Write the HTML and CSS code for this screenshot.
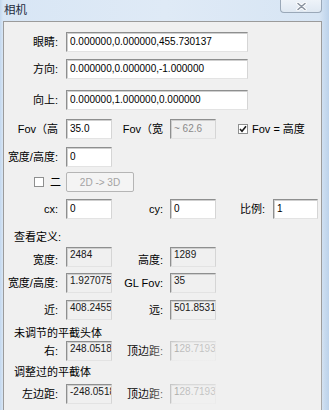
FILE: index.html
```html
<!DOCTYPE html>
<html>
<head>
<meta charset="utf-8">
<link rel="stylesheet" href="styles.css">
</head>
<body>
<div class="window">
  <div class="titlebar">
    <span class="title">相机</span>
    <div class="close">
      <svg width="11" height="9" viewBox="0 0 11 9"><path d="M2 1.5 L9 7.5 M9 1.5 L2 7.5" stroke="#ffffff" stroke-width="3.4" stroke-linecap="round"/><path d="M2 1.5 L9 7.5 M9 1.5 L2 7.5" stroke="#8a93a0" stroke-width="1.6" stroke-linecap="round"/></svg>
    </div>
  </div>
  <div class="panel">
    <div class="row mt10"><span class="lbl1">眼睛:</span><div class="edit long">0.000000,0.000000,455.730137</div></div>
    <div class="row mt7"><span class="lbl1">方向:</span><div class="edit long">0.000000,0.000000,-1.000000</div></div>
    <div class="row mt11"><span class="lbl1">向上:</span><div class="edit long">0.000000,1.000000,0.000000</div></div>
    <div class="row mt9">
      <span class="lbl1">Fov（高</span><div class="edit short">35.0</div>
      <span class="lbl2">Fov（宽</span><div class="edit short disabled">~ 62.6</div>
      <span class="check checked"><svg width="8" height="8" viewBox="0 0 8 8"><path d="M1 4 L3 6.2 L7 1.2" fill="none" stroke="#1a1a1a" stroke-width="1.6"/></svg></span>
      <span class="check-text">Fov = 高度</span>
    </div>
    <div class="row mt8"><span class="lbl1">宽度/高度:</span><div class="edit short">0</div></div>
    <div class="row mt5 btnrow">
      <span class="check"></span>
      <span class="two">二</span>
      <div class="button">2D -&gt; 3D</div>
    </div>
    <div class="row mt7">
      <span class="lbl1">cx:</span><div class="edit short">0</div>
      <span class="lbl2">cy:</span><div class="edit short">0</div>
      <span class="lbl3">比例:</span><div class="edit short45">1</div>
    </div>
    <div class="section mt11">查看定义:</div>
    <div class="row mt3">
      <span class="lbl1 low">宽度:</span><div class="ro">2484</div>
      <span class="lbl2 low">高度:</span><div class="ro">1289</div>
    </div>
    <div class="row mt6">
      <span class="lbl1">宽度/高度:</span><div class="ro">1.927075</div>
      <span class="lbl2">GL Fov:</span><div class="ro">35</div>
    </div>
    <div class="row mt7">
      <span class="lbl1">近:</span><div class="ro">408.2455</div>
      <span class="lbl2">远:</span><div class="ro">501.8531</div>
    </div>
    <div class="section mt6">未调节的平截头体</div>
    <div class="row mt1">
      <span class="lbl1">右:</span><div class="ro">248.0518</div>
      <span class="lbl2">顶边距:</span><div class="ro">128.7193</div>
    </div>
    <div class="section mt4">调整过的平截体</div>
    <div class="row mt5">
      <span class="lbl1">左边距:</span><div class="ro">-248.0518</div>
      <span class="lbl2">顶边距:</span><div class="ro">128.7193</div>
    </div>
  </div>
  <div class="fade"></div>
</div>
</body>
</html>
```
FILE: styles.css
```css
body {
  margin: 0;
}
.window {
  position: relative;
  width: 329px;
  height: 410px;
  overflow: hidden;
  background: linear-gradient(to right, #c4d8ee 0px, #d8e6f5 3px, #dfeaf6 50%, #d7e5f4 97%, #bcd2ea 100%);
  font-family: "Liberation Sans", "Noto Sans CJK SC", sans-serif;
  font-size: 11px;
  color: #000;
}
.titlebar {
  height: 21px;
  display: flex;
  justify-content: space-between;
  align-items: flex-start;
}
.title {
  margin: 2px 0 0 4px;
  font-family: "Noto Sans CJK SC", sans-serif;
  font-size: 11.5px;
  line-height: 14px;
  color: #1d2b3d;
}
.close {
  width: 40px;
  height: 12px;
  margin-right: 7px;
  border: 1px solid #9aa8b8;
  border-top: none;
  border-radius: 0 0 4px 4px;
  background: linear-gradient(#eef3f9, #dfe8f2);
  display: flex;
  align-items: center;
  justify-content: center;
}
.close svg {
  display: block;
}
.panel {
  margin-left: 3px;
  width: 317px;
  height: 400px;
  border: 1px solid #9b9b9b;
  background: #f0f0f0;
  display: flex;
  flex-direction: column;
}
.row {
  display: flex;
  align-items: center;
  height: 20px;
  flex: none;
}
.lbl1, .lbl2, .lbl3 {
  flex: none;
  text-align: right;
  white-space: nowrap;
  line-height: 14px;
}
.lbl1 {
  width: 54px;
  margin-right: 8px;
}
.lbl2 {
  width: 51px;
  margin-right: 7px;
}
.lbl3 {
  width: 49px;
  margin-right: 8px;
}
.low {
  padding-top: 5px;
}
.edit, .ro {
  box-sizing: border-box;
  height: 20px;
  flex: none;
  border: 1px solid;
  border-color: #8e8f8f #d5d5d5 #e3e3e3 #8e8f8f;
  box-shadow: inset 1px 1px 0 #cfcfcf;
  background: #fff;
  font-size: 10px;
  line-height: 14px;
  padding: 2px 0 0 3px;
  overflow: hidden;
  white-space: nowrap;
  color: #000;
}
.long {
  width: 182px;
}
.short {
  width: 46px;
}
.short45 {
  width: 45px;
}
.disabled {
  background: #f0f0f0;
  color: #8a8a8a;
}
.ro {
  width: 46px;
  background: #f0f0f0;
  padding-top: 0;
  color: #1a1a1a;
}
.check {
  box-sizing: border-box;
  width: 10px;
  height: 10px;
  flex: none;
  border: 1px solid #8e8f8f;
  background: #fff;
  display: flex;
  align-items: center;
  justify-content: center;
}
.checked {
  margin-left: 22px;
}
.check-text {
  margin-left: 4px;
  white-space: nowrap;
  line-height: 14px;
}
.btnrow {
  padding-left: 30px;
}
.two {
  margin-left: 6px;
  line-height: 14px;
}
.button {
  box-sizing: border-box;
  width: 68px;
  height: 20px;
  margin-left: 5px;
  border: 1px solid #b5b5b5;
  border-radius: 2px;
  background: #f4f4f4;
  color: #a3a3a3;
  font-size: 10px;
  display: flex;
  align-items: center;
  justify-content: center;
}
.section {
  flex: none;
  height: 14px;
  line-height: 14px;
  padding-left: 10px;
  white-space: nowrap;
}
.mt1 { margin-top: 1px; }
.mt3 { margin-top: 3px; }
.mt4 { margin-top: 4px; }
.mt5 { margin-top: 5px; }
.mt6 { margin-top: 6px; }
.mt7 { margin-top: 7px; }
.mt8 { margin-top: 8px; }
.mt9 { margin-top: 9px; }
.mt10 { margin-top: 10px; }
.mt11 { margin-top: 11px; }
.fade {
  position: absolute;
  left: 140px;
  top: 330px;
  width: 185px;
  height: 80px;
  background: linear-gradient(to right, rgba(240,240,240,0) 0%, rgba(240,240,240,0.75) 22%, rgba(240,240,240,0.85) 60%, rgba(240,240,240,0.6) 92%, rgba(240,240,240,0) 100%);
}
```
